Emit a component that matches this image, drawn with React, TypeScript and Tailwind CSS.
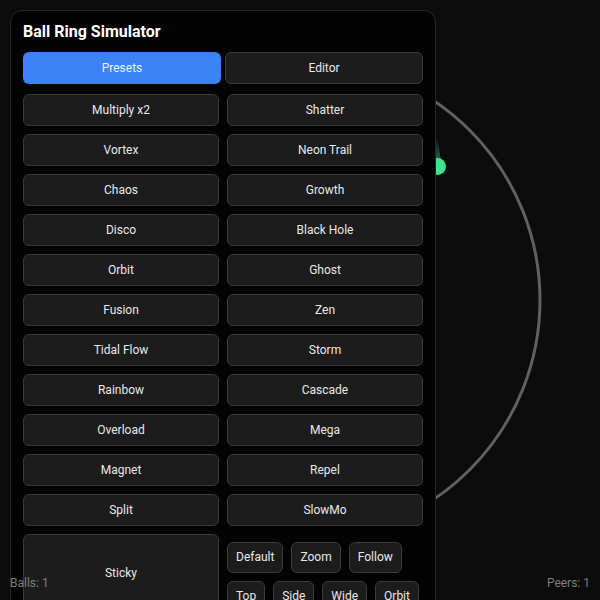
import React from "react";

const presets: [string, string][] = [
  ["Multiply x2", "Shatter"],
  ["Vortex", "Neon Trail"],
  ["Chaos", "Growth"],
  ["Disco", "Black Hole"],
  ["Orbit", "Ghost"],
  ["Fusion", "Zen"],
  ["Tidal Flow", "Storm"],
  ["Rainbow", "Cascade"],
  ["Overload", "Mega"],
  ["Magnet", "Repel"],
  ["Split", "SlowMo"],
];

const cams = ["Default", "Zoom", "Follow", "Top", "Side", "Wide", "Orbit"];

const btn =
  "h-8 rounded-md border border-[#3a3a3a] bg-[#1c1c1c] text-[12px] leading-none text-[#e8e8e8] flex items-center justify-center";

export default function App() {
  return (
    <div
      className="relative w-[600px] h-[600px] overflow-hidden bg-[#0c0c0c]"
      style={{ fontFamily: "Roboto, 'Liberation Sans', sans-serif" }}
    >
      <svg className="absolute inset-0" width="600" height="600" viewBox="0 0 600 600">
        <defs>
          <linearGradient id="trail" x1="0" y1="0" x2="0" y2="1">
            <stop offset="0" stopColor="#3ee28f" stopOpacity="0" />
            <stop offset="1" stopColor="#3ee28f" stopOpacity="0.45" />
          </linearGradient>
        </defs>
        <circle cx="300" cy="300" r="240" fill="none" stroke="#606060" strokeWidth="3" />
        <polygon points="436.6,137 437.4,137 441,161 433,161" fill="url(#trail)" />
        <circle cx="437.5" cy="166.5" r="8.5" fill="#3ee28f" />
      </svg>

      <div className="absolute left-[10px] top-[10px] w-[426px] rounded-xl border border-[#262626] bg-[#030303] p-3">
        <h1 className="text-[16px] font-bold leading-[17px] text-white mb-3">Ball Ring Simulator</h1>
        <div className="grid grid-cols-2 gap-1 mb-2.5">
          <div className="h-8 rounded-md bg-[#3b82f6] text-[12px] text-[#eef3ff] flex items-center justify-center">
            Presets
          </div>
          <div className={btn}>Editor</div>
        </div>
        <div className="grid grid-cols-2 gap-2">
          {presets.map(([a, b]) => (
            <React.Fragment key={a}>
              <div className={btn}>{a}</div>
              <div className={btn}>{b}</div>
            </React.Fragment>
          ))}
          <div className="rounded-md border border-[#3a3a3a] bg-[#1c1c1c] text-[12px] text-[#e8e8e8] flex items-center justify-center">
            Sticky
          </div>
          <div className="flex flex-wrap gap-2 pt-2">
            {cams.map((c) => (
              <div
                key={c}
                className="rounded-md border border-[#3a3a3a] bg-[#1c1c1c] px-2 py-1.5 text-[12px] leading-[17px] text-[#e8e8e8]"
              >
                {c}
              </div>
            ))}
          </div>
        </div>
      </div>

      <div className="absolute left-[10px] bottom-[9px] text-[12px] leading-4 text-[#7c7c7c]">Balls: 1</div>
      <div className="absolute right-[10px] bottom-[9px] text-[12px] leading-4 text-[#7c7c7c]">Peers: 1</div>
    </div>
  );
}
